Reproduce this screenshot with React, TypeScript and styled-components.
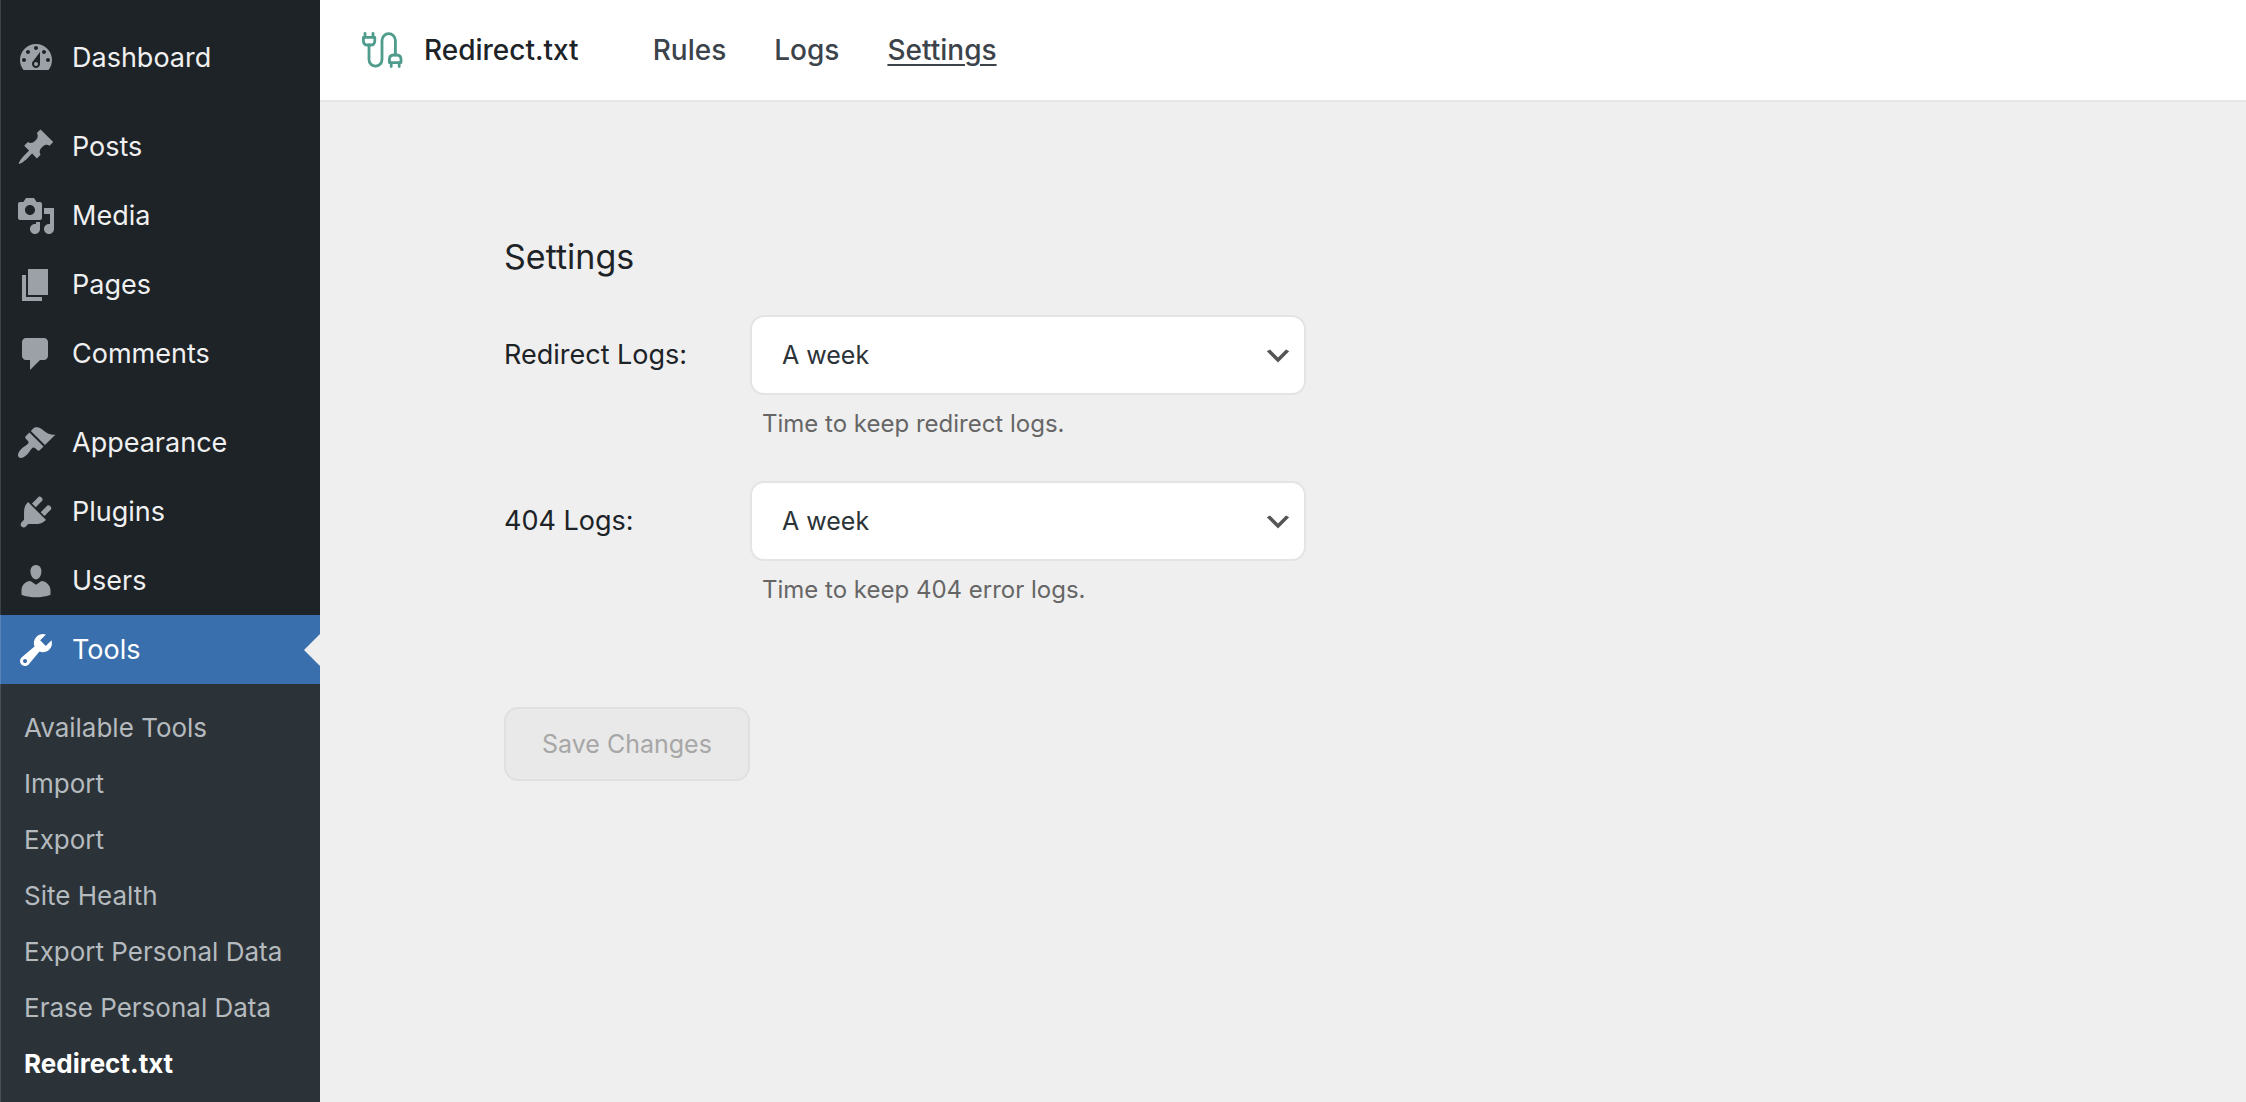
import React from "react";
import styled, { createGlobalStyle } from "styled-components";

const GlobalStyle = createGlobalStyle`
  *, *::before, *::after { box-sizing: border-box; }
  body {
    margin: 0;
    background: #efefef;
    color: #1d2327;
    font-family: Inter, Roboto, "Liberation Sans", sans-serif;
    font-size: 27px;
    line-height: 36px;
  }
  button, select { font: inherit; }
`;

const Page = styled.div`
  display: flex;
  min-height: 100vh;
`;

const Sidebar = styled.nav`
  position: relative;
  display: flex;
  flex-direction: column;
  flex: 0 0 320px;
  padding-top: 23px;
  background: #1d2327;

  &::after {
    content: "";
    position: absolute;
    inset: 0 auto 0 0;
    width: 1px;
    background: rgba(255, 255, 255, 0.14);
  }
`;

const MenuList = styled.ul`
  display: flex;
  flex-direction: column;
  flex: 1;
  margin: 0;
  padding: 0;
  list-style: none;
`;

const MenuItem = styled.li<{ $gap?: boolean; $grow?: boolean }>`
  display: flex;
  flex-direction: column;
  flex: ${(p) => (p.$grow ? "1" : "none")};
  margin-bottom: ${(p) => (p.$gap ? "20px" : "0")};
`;

const MenuLink = styled.a<{ $current?: boolean }>`
  position: relative;
  display: flex;
  align-items: center;
  gap: 16px;
  height: 69px;
  padding: 0 16px;
  background: ${(p) => (p.$current ? "#3a6fad" : "transparent")};
  color: ${(p) => (p.$current ? "#fff" : "#f0f0f1")};
  text-decoration: none;

  svg {
    width: 40px;
    height: 40px;
    fill: ${(p) => (p.$current ? "#fff" : "#9ca1a7")};
  }

  &::after {
    content: "";
    display: ${(p) => (p.$current ? "block" : "none")};
    position: absolute;
    right: 0;
    top: 50%;
    margin-top: -16px;
    border: 16px solid transparent;
    border-left-width: 0;
    border-right-color: #efefef;
  }
`;

const SubMenu = styled.ul`
  flex: 1;
  margin: 0;
  padding: 16px 0 8px;
  background: #2c3338;
  list-style: none;
`;

const SubLink = styled.a<{ $current?: boolean }>`
  display: block;
  padding: 0 24px;
  color: ${(p) => (p.$current ? "#fff" : "#b5babf")};
  font-size: 26px;
  font-weight: ${(p) => (p.$current ? 700 : 400)};
  line-height: 56px;
  text-decoration: none;
  white-space: nowrap;
`;

const Body = styled.div`
  flex: 1;
  min-width: 0;
`;

const Header = styled.header`
  display: flex;
  align-items: center;
  height: 102px;
  padding: 0 40px;
  border-bottom: 2px solid #e6e6e6;
  background: #fff;
  font-size: 28px;
`;

const Brand = styled.a`
  display: flex;
  align-items: center;
  gap: 20px;
  margin-right: 74px;
  color: #1d2327;
  font-weight: 500;
  text-decoration: none;
`;

const Tabs = styled.nav`
  display: flex;
  gap: 48px;
`;

const Tab = styled.a<{ $current?: boolean }>`
  color: #3c434a;
  font-weight: 500;
  text-decoration: ${(p) => (p.$current ? "underline" : "none")};
  text-decoration-thickness: 2px;
  text-underline-offset: 4px;
`;

const Content = styled.main`
  padding: 132px 184px 40px;
`;

const Title = styled.h1`
  margin: 0 0 35px;
  font-size: 34px;
  font-weight: 400;
  line-height: 46px;
`;

const Field = styled.div`
  display: grid;
  grid-template-columns: 246px minmax(0, 556px);
  align-items: center;
  margin-bottom: 40px;
`;

const SelectBox = styled.div`
  position: relative;

  svg {
    position: absolute;
    right: 12px;
    top: 50%;
    width: 32px;
    height: 32px;
    margin-top: -15px;
    fill: #555;
    pointer-events: none;
  }
`;

const Select = styled.select`
  appearance: none;
  display: block;
  width: 100%;
  height: 80px;
  padding: 0 60px 0 30px;
  border: 2px solid #e4e4e5;
  border-radius: 14px;
  background: #fff;
  color: #2c3338;
  font-size: 25px;
`;

const Hint = styled.p`
  grid-column: 2;
  margin: 12px 0 0;
  padding-left: 12px;
  color: #666;
  font-size: 24px;
  line-height: 34px;
`;

const SaveButton = styled.button`
  height: 74px;
  margin-top: 60px;
  padding: 0 36px;
  border: 2px solid #e0e0e0;
  border-radius: 14px;
  background: #e9e9e9;
  color: #a7a7a7;
  font-size: 25px;
`;

const icons = {
  dashboard:
    "M3.76 16h12.48c1.1-1.37 1.76-3.11 1.76-5 0-4.42-3.58-8-8-8s-8 3.58-8 8c0 1.89.66 3.63 1.76 5zM10 4c.55 0 1 .45 1 1s-.45 1-1 1-1-.45-1-1 .45-1 1-1zM6 6c.55 0 1 .45 1 1s-.45 1-1 1-1-.45-1-1 .45-1 1-1zm8 0c.55 0 1 .45 1 1s-.45 1-1 1-1-.45-1-1 .45-1 1-1zm-5.37 5.55L12 7v6c0 1.1-.9 2-2 2s-2-.9-2-2c0-.57.24-1.08.63-1.45zM4 10c.55 0 1 .45 1 1s-.45 1-1 1-1-.45-1-1 .45-1 1-1zm12 0c.55 0 1 .45 1 1s-.45 1-1 1-1-.45-1-1 .45-1 1-1zm-5 3c0-.55-.45-1-1-1s-1 .45-1 1 .45 1 1 1 1-.45 1-1z",
  posts:
    "M10.44 3.02l1.82-1.82 6.36 6.35-1.83 1.82c-1.05-.68-2.48-.57-3.41.36l-.75.75c-.92.93-1.04 2.35-.35 3.41l-1.83 1.82-2.41-2.41-2.8 2.79c-.42.42-3.38 2.71-3.8 2.29s1.86-3.39 2.28-3.81l2.79-2.79L4.1 9.36l1.83-1.82c1.05.69 2.48.57 3.4-.36l.75-.75c.93-.92 1.05-2.35.36-3.41z",
  media:
    "M13 11V4c0-.55-.45-1-1-1h-1.67L9 1H5L3.67 3H2c-.55 0-1 .45-1 1v7c0 .55.45 1 1 1h10c.55 0 1-.45 1-1zM7 4.5c1.38 0 2.5 1.12 2.5 2.5S8.38 9.5 7 9.5 4.5 8.38 4.5 7 5.62 4.5 7 4.5zM14 6h5v10.5c0 1.38-1.12 2.5-2.5 2.5S14 17.88 14 16.5s1.12-2.5 2.5-2.5c.17 0 .34.02.5.05V9h-3V6zm-4 8.05V13h2v3.5c0 1.38-1.12 2.5-2.5 2.5S7 17.88 7 16.5 8.12 14 9.5 14c.17 0 .34.02.5.05z",
  pages: "M6 15V2h10v13H6zm-1 1h8v2H3V5h2v11z",
  comments:
    "M5 2h9c1.1 0 2 .9 2 2v7c0 1.1-.9 2-2 2h-2l-5 5v-5H5c-1.1 0-2-.9-2-2V4c0-1.1.9-2 2-2z",
  appearance:
    "M14.48 11.06L7.41 3.99l1.5-1.5c.5-.56 2.3-.47 3.51.32 1.21.8 1.43 1.28 2.91 2.1 1.18.64 2.45 1.26 4.45.85zm-.71.71L6.7 4.7 4.93 6.47c-.39.39-.39 1.02 0 1.41l1.06 1.06c.39.39.39 1.03 0 1.42-.6.6-1.43 1.11-2.21 1.69-.35.26-.7.53-1.01.84C1.43 14.23.4 16.08 1.4 17.07c.99 1 2.84-.03 4.18-1.36.31-.31.58-.66.85-1.02.57-.78 1.08-1.61 1.69-2.21.39-.39 1.02-.39 1.41 0l1.06 1.06c.39.39 1.02.39 1.41 0z",
  plugins:
    "M13.11 4.36L9.87 7.6 8 5.73l3.24-3.24c.35-.34 1.05-.2 1.56.32.52.51.66 1.21.31 1.55zm-8 1.77l.91-1.12 9.01 9.01-1.19.84c-.71.71-2.63 1.16-3.82 1.16H6.14L4.9 17.26c-.59.59-1.54.59-2.12 0-.59-.58-.59-1.53 0-2.12l1.24-1.24v-3.88c0-1.13.4-3.19 1.09-3.89zm7.26 3.97l3.24-3.24c.34-.35 1.04-.21 1.55.31.52.51.66 1.21.31 1.55l-3.24 3.25z",
  users:
    "M10 9.25c-2.27 0-2.73-3.44-2.73-3.44C7 4.02 7.82 2 9.97 2c2.16 0 2.98 2.02 2.71 3.81 0 0-.41 3.44-2.68 3.44zm0 2.57L12.72 10c2.39 0 4.52 2.33 4.52 4.53v2.49s-3.65 1.13-7.24 1.13c-3.65 0-7.24-1.13-7.24-1.13v-2.49c0-2.25 1.94-4.48 4.47-4.48z",
  tools:
    "M16.68 9.77c-1.34 1.34-3.3 1.67-4.95.99l-5.41 6.52c-.99.99-2.59.99-3.58 0s-.99-2.59 0-3.57l6.52-5.42c-.68-1.65-.35-3.61.99-4.95 1.28-1.28 3.12-1.62 4.72-1.06l-2.89 2.89 2.82 2.82 2.86-2.87c.53 1.58.18 3.39-1.08 4.65zM3.81 16.21c.4.39 1.04.39 1.43 0 .4-.4.4-1.04 0-1.43-.39-.4-1.03-.4-1.43 0-.39.39-.39 1.03 0 1.43z",
  chevron: "M5 6l5 5 5-5 2 1-7 7-7-7 2-1z",
};

const Icon = ({ name }: { name: keyof typeof icons }) => (
  <svg viewBox="0 0 20 20" aria-hidden="true">
    <path d={icons[name]} />
  </svg>
);

const Logo = () => (
  <svg
    width="44"
    height="40"
    viewBox="0 0 44 40"
    fill="none"
    stroke="#4f9c8d"
    strokeWidth="2.8"
    strokeLinecap="round"
    strokeLinejoin="round"
    aria-hidden="true"
  >
    <path d="M5 3.4V7M13 3.4V7" />
    <path d="M3.4 7.4H14.8V10.4Q14.8 15 10.6 15H7.6Q3.4 15 3.4 10.4Z" />
    <path d="M9 15V29.6A6.5 6.5 0 0 0 22 29.6V10.4A6.7 6.7 0 0 1 35.4 10.4V25" />
    <path d="M29.4 32.6H41V29.6Q41 25 36.8 25H33.6Q29.4 25 29.4 29.6Z" />
    <path d="M31.2 33V36.6M39.2 33V36.6" />
  </svg>
);

type Entry = { label: string; icon: keyof typeof icons; gap?: boolean };

const menu: Entry[] = [
  { label: "Dashboard", icon: "dashboard", gap: true },
  { label: "Posts", icon: "posts" },
  { label: "Media", icon: "media" },
  { label: "Pages", icon: "pages" },
  { label: "Comments", icon: "comments", gap: true },
  { label: "Appearance", icon: "appearance" },
  { label: "Plugins", icon: "plugins" },
  { label: "Users", icon: "users" },
];

const toolLinks = [
  "Available Tools",
  "Import",
  "Export",
  "Site Health",
  "Export Personal Data",
  "Erase Personal Data",
  "Redirect.txt",
];

const tabs = ["Rules", "Logs", "Settings"];

const fields = [
  { id: "redirect-logs", label: "Redirect Logs:", hint: "Time to keep redirect logs." },
  { id: "error-logs", label: "404 Logs:", hint: "Time to keep 404 error logs." },
];

export default function App() {
  return (
    <>
      <GlobalStyle />
      <Page>
        <Sidebar aria-label="Main menu">
          <MenuList>
            {menu.map((m) => (
              <MenuItem key={m.label} $gap={m.gap}>
                <MenuLink href="#">
                  <Icon name={m.icon} />
                  {m.label}
                </MenuLink>
              </MenuItem>
            ))}
            <MenuItem $grow>
              <MenuLink href="#" $current>
                <Icon name="tools" />
                Tools
              </MenuLink>
              <SubMenu>
                {toolLinks.map((label) => (
                  <li key={label}>
                    <SubLink href="#" $current={label === "Redirect.txt"}>
                      {label}
                    </SubLink>
                  </li>
                ))}
              </SubMenu>
            </MenuItem>
          </MenuList>
        </Sidebar>
        <Body>
          <Header>
            <Brand href="#">
              <Logo />
              Redirect.txt
            </Brand>
            <Tabs aria-label="Plugin sections">
              {tabs.map((tab) => (
                <Tab key={tab} href="#" $current={tab === "Settings"}>
                  {tab}
                </Tab>
              ))}
            </Tabs>
          </Header>
          <Content>
            <Title>Settings</Title>
            <form onSubmit={(e) => e.preventDefault()}>
              {fields.map((f) => (
                <Field key={f.id}>
                  <label htmlFor={f.id}>{f.label}</label>
                  <SelectBox>
                    <Select id={f.id} defaultValue="week" aria-describedby={`${f.id}-hint`}>
                      <option value="week">A week</option>
                    </Select>
                    <Icon name="chevron" />
                  </SelectBox>
                  <Hint id={`${f.id}-hint`}>{f.hint}</Hint>
                </Field>
              ))}
              <SaveButton type="submit" disabled>
                Save Changes
              </SaveButton>
            </form>
          </Content>
        </Body>
      </Page>
    </>
  );
}
